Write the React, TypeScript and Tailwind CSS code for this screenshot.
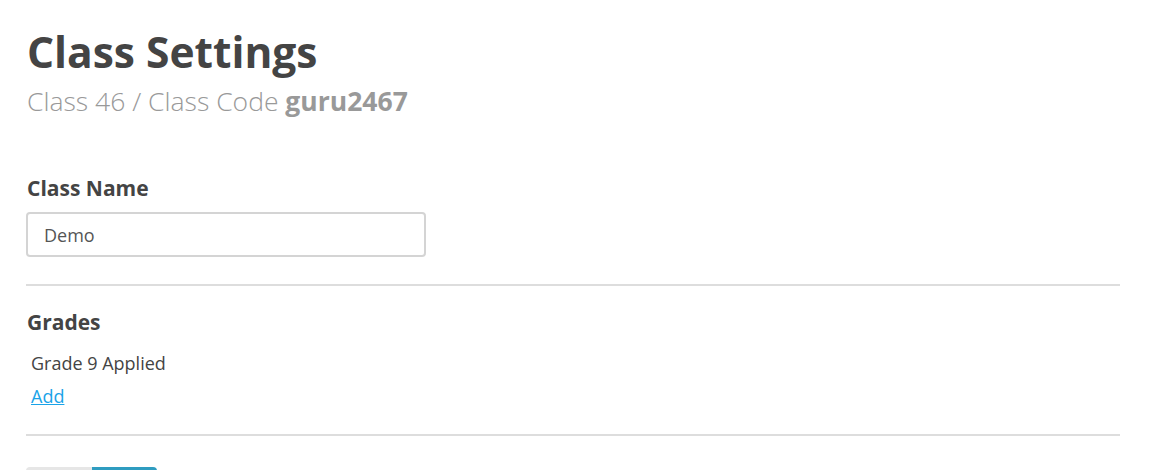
export default function App() {
  return (
    <div className="min-h-screen bg-white font-['Open_Sans',sans-serif] text-[#444]">
      <div className="w-[1094px] ml-[26px] pt-[24px]">
        {/* Header */}
        <h1 className="text-[42.5px] font-bold leading-[56px] text-[#444] ml-[1px]">Class Settings</h1>
        <p className="mt-[5px] text-[26.5px] font-light leading-[32px] text-[#999] ml-[1px]">
          Class 46 / Class Code <span className="font-bold">guru2467</span>
        </p>

        {/* Class name */}
        <div className="mt-[57px]">
          <h2 className="text-[21px] font-bold leading-[28px] ml-[1px]">Class Name</h2>
          <input
            defaultValue="Demo"
            className="mt-[10px] w-[400px] h-[45px] rounded-[4px] border-2 border-[#d4d4d4] px-[16px] text-[18px] text-[#555] outline-none"
          />
        </div>

        <hr className="mt-[27px] border-0 border-t-2 border-[#ddd]" />

        {/* Grades */}
        <div className="pt-[22px]">
          <h2 className="text-[21px] font-bold leading-[28px] ml-[1px]">Grades</h2>
          <p className="mt-[15px] ml-[5px] text-[18px] leading-[24px] text-[#444]">Grade 9 Applied</p>
          <a href="#" className="block mt-[9px] ml-[5px] w-fit text-[18px] leading-[24px] text-[#1aa3e8] underline">
            Add
          </a>
        </div>

        <hr className="mt-[26px] border-0 border-t-2 border-[#ddd]" />

        {/* Student toggle */}
        <div className="mt-[31px] flex items-center gap-[28px]">
          <div className="flex w-[131px] h-[34px] rounded-[4px] overflow-hidden">
            <div className="flex-1 bg-[#e6e6e6]" />
            <div className="flex-1 bg-[#2f9cc0]" />
          </div>
          <span className="text-[18px] text-[#444]">Students can join</span>
        </div>
      </div>
    </div>
  );
}
